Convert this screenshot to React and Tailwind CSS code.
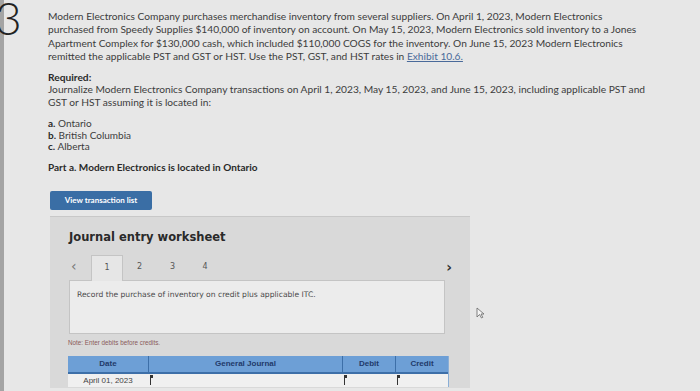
import React from 'react';

const body = { fontFamily: 'Lato, "Open Sans", sans-serif' };
const verdana = { fontFamily: '"DejaVu Sans", Verdana, sans-serif' };
const arial = { fontFamily: '"Liberation Sans", Arial, sans-serif' };

function Marker() {
  return (
    <span className="absolute left-[2px] top-[1px] w-[1px] h-[10px] bg-[#333]">
      <span className="absolute left-[1px] top-0 w-[2px] h-[3px] bg-[#333]" />
    </span>
  );
}

export default function App() {
  return (
    <div className="relative w-[700px] h-[391px] overflow-hidden bg-[#e7e7e7] flex" style={body}>
      <div className="w-[4px] bg-[#a4a4a4]" />
      <div className="relative w-[44px]">
        <span className="absolute left-[-9px] top-[-5px] text-[46px] leading-none font-light text-[#222]">3</span>
      </div>
      <div className="flex-1 pt-[10px] text-[#3c3c3c]">
        <div className="text-[10.2px] leading-[13.3px]">
          <div>Modern Electronics Company purchases merchandise inventory from several suppliers. On April 1, 2023, Modern Electronics</div>
          <div>purchased from Speedy Supplies $140,000 of inventory on account. On May 15, 2023, Modern Electronics sold inventory to a Jones</div>
          <div>Apartment Complex for $130,000 cash, which included $110,000 COGS for the inventory. On June 15, 2023 Modern Electronics</div>
          <div>remitted the applicable PST and GST or HST. Use the PST, GST, and HST rates in <span className="text-[#4a6a9a] underline">Exhibit 10.6.</span></div>
        </div>
        <div className="mt-[8px] text-[10.2px] leading-[12px] font-bold text-[#2a2a2a]">Required:</div>
        <div className="text-[10.2px] leading-[12.5px]">
          <div>Journalize Modern Electronics Company transactions on April 1, 2023, May 15, 2023, and June 15, 2023, including applicable PST and</div>
          <div>GST or HST assuming it is located in:</div>
        </div>
        <div className="mt-[10px] text-[10px] leading-[11.5px]">
          <div><b className="text-[#2a2a2a]">a.</b> Ontario</div>
          <div><b className="text-[#2a2a2a]">b.</b> British Columbia</div>
          <div><b className="text-[#2a2a2a]">c.</b> Alberta</div>
        </div>
        <div className="mt-[8px] text-[10px] leading-[12px] font-bold text-[#2a2a2a]">Part a. Modern Electronics is located in Ontario</div>

        <div className="mt-[18px] ml-[2px] w-[102px] h-[19px] bg-[#3a6ea5] rounded-[2px] flex items-center justify-center text-white text-[8px] font-bold">
          View transaction list
        </div>

        <div className="mt-[6px] ml-[2px] w-[420px] h-[172px] bg-[#d9d9d9] border-t border-[#c8c8c8] pl-[19px] pr-[22px]" style={verdana}>
          <div className="pt-[12px] text-[11.5px] font-bold text-[#2a2a2a] leading-[16px]">Journal entry worksheet</div>
          <div className="mt-[8px] flex items-end h-[27px] relative">
            <span className="w-[22px] pl-[2px] pb-[7px] text-[14px] leading-none text-[#777]">‹</span>
            <div className="w-[32px] h-[26px] bg-[#e6e6e6] border border-b-0 border-[#c4c4c4] flex items-center justify-center text-[8px] text-[#555] relative top-[1px]">1</div>
            <div className="w-[33px] h-[26px] flex items-center justify-center text-[8px] text-[#555]">2</div>
            <div className="w-[33px] h-[26px] flex items-center justify-center text-[8px] text-[#555]">3</div>
            <div className="w-[32px] h-[26px] flex items-center justify-center text-[8px] text-[#555]">4</div>
            <span className="absolute right-[-4px] top-[7px] text-[14px] leading-none font-bold text-[#333]">›</span>
          </div>
          <div className="w-[376px] h-[54px] bg-[#ececec] border border-[#c4c4c4] px-[7px] pt-[8px] text-[7.6px] text-[#4a4a4a]">
            Record the purchase of inventory on credit plus applicable ITC.
          </div>
          <div className="mt-[4px] -ml-[1px] text-[6.3px] text-[#8a5a5a]" style={arial}>Note: Enter debits before credits.</div>
          <div className="mt-[9px] -ml-[1px] w-[381px] border-r border-[#8aaed6]" style={arial}>
            <div className="flex h-[18px] bg-[#6d9fd6] border-b-[2px] border-[#3d6fa8] text-[8px] font-bold text-[#223a6a]">
              <div className="w-[80px] flex items-center justify-center">Date</div>
              <div className="w-[194px] flex items-center justify-center border-l border-[#3d6fa8]">General Journal</div>
              <div className="w-[53px] flex items-center justify-center border-l border-[#3d6fa8]">Debit</div>
              <div className="flex-1 flex items-center justify-center border-l border-[#3d6fa8]">Credit</div>
            </div>
            <div className="flex h-[13px] bg-[#f0f0f0] text-[8px] text-[#444]">
              <div className="w-[80px] flex items-center justify-center">April 01, 2023</div>
              <div className="w-[194px] relative"><Marker /></div>
              <div className="w-[53px] relative"><Marker /></div>
              <div className="flex-1 relative"><Marker /></div>
            </div>
          </div>
        </div>
      </div>
      <svg className="absolute left-[476px] top-[307px]" width="9" height="12" viewBox="0 0 9 12">
        <path d="M1 1 L1 10 L3.5 7.5 L5.5 11 L6.8 10.3 L5 7 L8 7 Z" fill="#f4f4f4" stroke="#666" strokeWidth="0.8" />
      </svg>
    </div>
  );
}
